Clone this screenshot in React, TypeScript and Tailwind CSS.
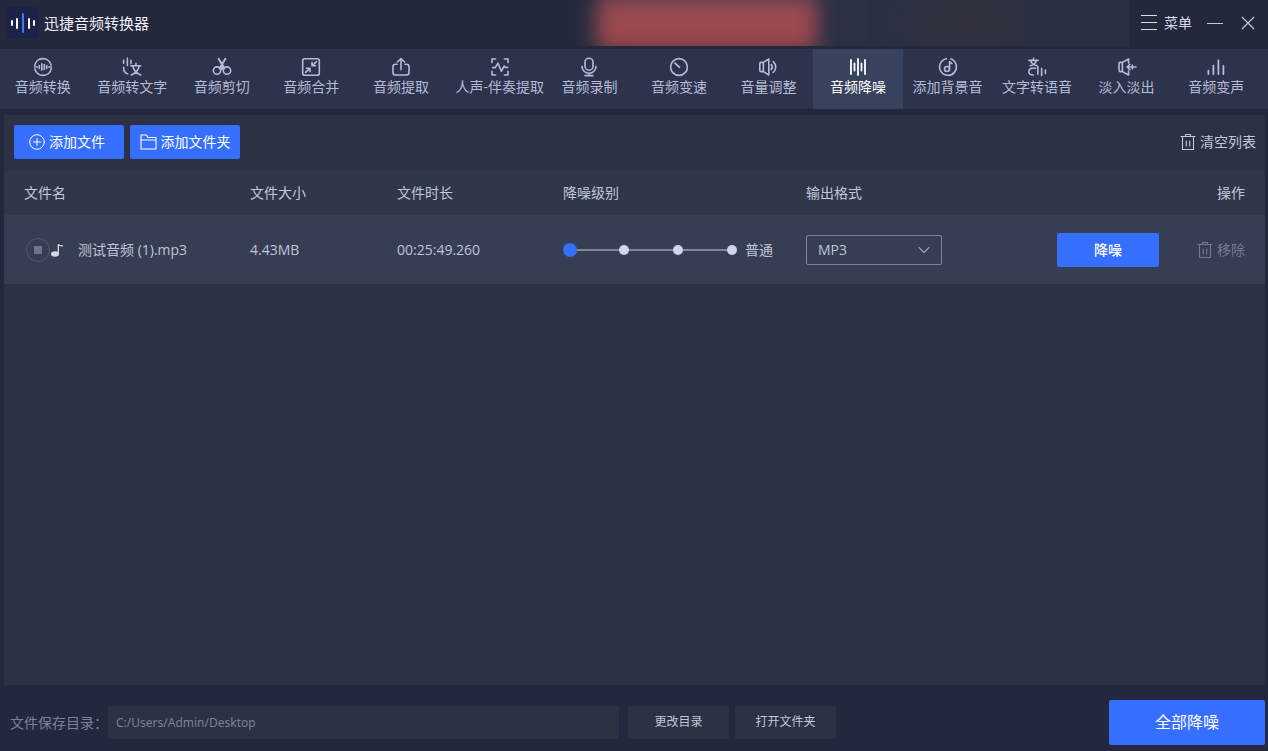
import { useState, type ReactNode } from "react";

const strokeProps = {
  fill: "none",
  stroke: "currentColor",
  strokeWidth: 1.6,
  strokeLinecap: "round",
  strokeLinejoin: "round",
} as const;

function TabIcon({ children }: { children: ReactNode }) {
  return (
    <svg viewBox="0 0 20 20" className="h-5 w-5 shrink-0" aria-hidden="true" {...strokeProps}>
      {children}
    </svg>
  );
}

const tabs: { label: string; wide?: boolean; icon: ReactNode }[] = [
  {
    label: "音频转换",
    icon: (
      <>
        <path d="M1.7 8.4A8.4 8.4 0 0 1 18.1 8M18.3 11.6A8.4 8.4 0 0 1 1.9 12" />
        <path d="M1.7 10h2.6M15.7 10h2.6M6.3 8.6v2.8M8.8 6.8v6.4M11.3 7.6v4.8M13.7 8.6v2.8" />
      </>
    ),
  },
  {
    label: "音频转文字",
    icon: (
      <>
        <path d="M1.600 3.200v3M5.400 1.400v7M9 3.200v3.400M1.600 10.400c0 3.600 1.200 5.800 4 6.400" />
        <path d="M8.800 8.800h10M14 6.400v2.400M10.800 9c.8 4 3.600 7.400 8 9M17.200 9c-.8 4-3.600 7.400-8 9" />
      </>
    ),
  },
  {
    label: "音频剪切",
    icon: (
      <>
        <circle cx="5" cy="13.600" r="3.700" />
        <circle cx="15" cy="13.600" r="3.700" />
        <path d="M6.600 1.800l5.800 9.400M13.400 1.800L7.600 11.200M10 8v4" strokeWidth="2" />
      </>
    ),
  },
  {
    label: "音频合并",
    icon: (
      <>
        <rect x="1.7" y="1.7" width="16.6" height="16.6" rx="2" />
        <path d="M15.4 4.6l-4 4M11 5.4v3.4h3.6M4.6 15.4l4-4M5.4 11.2H9v3.6" />
      </>
    ),
  },
  {
    label: "音频提取",
    icon: (
      <>
        <path d="M6 7.2H4.4A2.4 2.4 0 0 0 2 9.6v6A2.4 2.4 0 0 0 4.4 18h11.2a2.4 2.4 0 0 0 2.4-2.4v-6a2.4 2.4 0 0 0-2.4-2.4H14" />
        <path d="M10 12.6V1.8M6.4 5L10 1.6 13.6 5" />
      </>
    ),
  },
  {
    label: "人声-伴奏提取",
    wide: true,
    icon: (
      <>
        <path d="M2 5.6V2h3.6M14.4 2H18v3.6M18 14.4V18h-3.6M5.6 18H2v-3.6" />
        <path d="M2.6 10.6h2.6l2.8-4.4 3.4 8L14.2 9l1 1.4h2.4" />
      </>
    ),
  },
  {
    label: "音频录制",
    icon: (
      <>
        <rect x="6" y="1.2" width="8" height="12" rx="4" />
        <path d="M3 9.4a7 6.800 0 0 0 14 0M10 16.2v2.2M6 18.6h8" />
      </>
    ),
  },
  {
    label: "音频变速",
    icon: (
      <>
        <circle cx="10" cy="10" r="8.4" />
        <path d="M6 6.2l4.4 4" strokeWidth="1.8" />
      </>
    ),
  },
  {
    label: "音量调整",
    icon: (
      <>
        <path d="M5.4 5.4H3.2A1.4 1.4 0 0 0 1.8 6.8v6.4a1.4 1.4 0 0 0 1.4 1.4h2.2zM5.4 5.4L10.8 2v16l-5.4-3.4" />
        <path d="M13.2 7.6a3.600 3.600 0 0 1 0 4.800M15.2 4.600a7 7 0 0 1 0 10.800" />
      </>
    ),
  },
  {
    label: "音频降噪",
    icon: (
      <path
        d="M3 3v14M6.500 6.400v7.200M10 2v16M13.500 6.400v7.200M17 3v14"
        strokeWidth="1.800"
      />
    ),
  },
  {
    label: "添加背景音",
    icon: (
      <>
        <path d="M13 2.1a8.400 8.400 0 1 1-4.600-.4" />
        <circle cx="9" cy="12" r="2.5" />
        <path d="M11.5 12V4.600l2.400 2" />
      </>
    ),
  },
  {
    label: "文字转语音",
    icon: (
      <>
        <path d="M2 3.400h9M6.500 1.200v2.200M3.600 3.600c.6 2.200 2.800 4.200 6.200 5.200M9.400 3.600C8.800 5.800 6.600 7.800 3.200 8.800" />
        <path d="M8.400 11.200C5 10.400 2 11.600 1.800 14.400c-.2 2.200 1.600 3.600 4.600 3.600M10.800 9.600v7.600M14.600 11.400v7M18.400 13v3.600" />
      </>
    ),
  },
  {
    label: "淡入淡出",
    icon: (
      <>
        <path d="M5.400 5.400H3.400A1.400 1.400 0 0 0 2 6.800v6.400a1.400 1.400 0 0 0 1.400 1.400h2zM5.400 5.400L11.600 2v4M11.600 14v4l-6.200-3.400" />
        <path d="M10 10h9M12.800 7.400L10.200 10l2.600 2.600M15.400 8v4" />
      </>
    ),
  },
  {
    label: "音频变声",
    icon: <path d="M2.4 13.600V17M7.400 8.600V17M12.400 3.400V17M17.400 9v8" strokeWidth="1.800" />,
  },
];

const files = [{ name: "测试音频 (1).mp3", size: "4.43MB", duration: "00:25:49.260" }];

const levels = ["普通", "中等", "较强", "最强"];

function TrashIcon() {
  return (
    <svg viewBox="0 0 16 18" className="h-[18px] w-4" aria-hidden="true" {...strokeProps} strokeWidth={1.1}>
      <path d="M1 3.500h14M5.500 3.500v-2h5v2M2.500 3.500v13h11v-13M6.300 8v5M9.700 8v5" />
    </svg>
  );
}

function FileRow({ name, size, duration }: (typeof files)[number]) {
  const [level, setLevel] = useState(0);

  return (
    <tr className="h-[69px] bg-[#363e54] text-[#bfc4d9]">
      <td className="pl-[22px]">
        <div className="flex items-center">
          <button aria-label="停止" className="grid h-6 w-6 place-items-center rounded-full border border-[#535b71]">
            <span className="h-2 w-2 bg-[#6c748b]" />
          </button>
          <svg viewBox="0 0 14 16" className="h-4 w-[14px]" aria-hidden="true">
            <ellipse cx="5" cy="12" rx="4" ry="2.800" fill="#d5d8ea" />
            <path d="M8.300 12V2.200q1 2 4.700 1.600" fill="none" stroke="#d5d8ea" strokeWidth="1.300" />
          </svg>
          <span className="ml-[14px]">{name}</span>
        </div>
      </td>
      <td>{size}</td>
      <td>{duration}</td>
      <td>
        <div className="flex items-center gap-1.5">
          <div className="relative h-[14px] w-[176px]">
            <div className="flex h-full items-center justify-between bg-[linear-gradient(#7f879e,#7f879e)] bg-[length:162px_2px] bg-center bg-no-repeat px-[2px]">
              {levels.map((item) => (
                <span key={item} className="h-[10px] w-[10px] rounded-full bg-[#d2d4ea]" />
              ))}
            </div>
            <input
              type="range"
              aria-label="降噪级别"
              min={0}
              max={3}
              value={level}
              onChange={(e) => setLevel(Number(e.target.value))}
              className="absolute inset-0 h-full w-full cursor-pointer appearance-none bg-transparent [&::-webkit-slider-thumb]:h-[14px] [&::-webkit-slider-thumb]:w-[14px] [&::-webkit-slider-thumb]:appearance-none [&::-webkit-slider-thumb]:rounded-full [&::-webkit-slider-thumb]:bg-[#356fff]"
            />
          </div>
          <span>{levels[level]}</span>
        </div>
      </td>
      <td>
        <div className="relative w-[136px]">
          <select
            aria-label="输出格式"
            className="h-[30px] w-full appearance-none rounded-xs border border-[#7d859b] bg-transparent pl-[11px]"
          >
            <option>MP3</option>
            <option>WAV</option>
            <option>FLAC</option>
          </select>
          <svg
            viewBox="0 0 12 8"
            className="pointer-events-none absolute top-[11px] right-3 h-2 w-3 text-[#9aa1b8]"
            aria-hidden="true"
            {...strokeProps}
            strokeWidth={1.1}
          >
            <path d="M1 1.500l5 5 5-5" />
          </svg>
        </div>
      </td>
      <td className="pr-5">
        <div className="flex items-center justify-end gap-[38px]">
          <button className="h-[34px] w-[102px] rounded-xs bg-[#366fff] font-medium text-white">降噪</button>
          <button className="flex items-center gap-1 text-[#737b92]">
            <TrashIcon />
            移除
          </button>
        </div>
      </td>
    </tr>
  );
}

export default function App() {
  const [active, setActive] = useState("音频降噪");

  return (
    <div className="flex min-h-screen flex-col overflow-x-hidden bg-[#24283c] font-['Open_Sans','Noto_Sans_CJK_SC',sans-serif] text-sm leading-5 text-[#c3c7dc]">
      {/* Title bar */}
      <header className="flex h-[49px] items-center pb-[3px]">
        <div className="ml-[7px] grid h-8 w-8 place-items-center rounded-sm bg-[#1c2349]">
          <svg viewBox="0 0 28 20" className="h-5 w-7" fill="none" strokeWidth="2" strokeLinecap="round" aria-hidden="true">
            <path d="M3 8v4M8 6v9M20 6v9M25 8v4" stroke="#fff" />
            <path d="M14 1v18" stroke="#3f78ff" />
          </svg>
        </div>
        <h1 className="ml-[5px] text-[15px] text-[#eceef8]">迅捷音频转换器</h1>
        <div className="ml-auto flex h-[46px] w-[570px] self-start overflow-hidden bg-linear-to-r from-[#24283c] via-[#2d3145] via-15% to-[#2a2f43]">
          <div className="-my-1 ml-[38px] w-[220px] bg-linear-to-b from-[#934c55] to-[#a3474a] blur-[10px]" />
          <div className="ml-[100px] w-[100px] bg-[#32343b] blur-[20px]" />
        </div>
        <button className="ml-3 flex items-center gap-[7px] text-[#d7daea]">
          <svg viewBox="0 0 16 16" className="h-4 w-4" stroke="currentColor" aria-hidden="true">
            <path d="M0 .500h16M0 7.500h16M0 14.500h16" />
          </svg>
          菜单
        </button>
        <button aria-label="最小化" className="ml-[15px]">
          <svg viewBox="0 0 16 16" className="h-4 w-4" stroke="currentColor" aria-hidden="true">
            <path d="M0 8.500h16" />
          </svg>
        </button>
        <button aria-label="关闭" className="mr-[13px] ml-[18px]">
          <svg viewBox="0 0 14 14" className="h-[14px] w-[14px]" stroke="currentColor" strokeWidth="1.2" aria-hidden="true">
            <path d="M1 1l12 12M13 1L1 13" />
          </svg>
        </button>
      </header>

      {/* Function tabs */}
      <nav className="-ml-0.5 flex h-[60px] bg-[#2c334a] pr-[7px] text-[#b6bcd6]">
        {tabs.map(({ label, wide, icon }) => (
          <button
            key={label}
            onClick={() => setActive(label)}
            className={`flex flex-col items-center pt-2 whitespace-nowrap ${
              wide ? "w-[99px] shrink-0 pl-[9px]" : "min-w-0 flex-1"
            } ${active === label ? "bg-[#38425c] text-white" : ""}`}
          >
            <TabIcon>{icon}</TabIcon>
            {label}
          </button>
        ))}
      </nav>

      {/* File list */}
      <main className="mt-1.5 mr-[3px] ml-1 flex-1 bg-[#2c3144]">
        <div className="flex h-14 items-center gap-1.5 pr-[9px] pb-0.5 pl-[10px]">
          <button className="flex h-[34px] w-[110px] items-center justify-center gap-1 rounded-xs bg-[#366fff] pr-1 text-white">
            <svg viewBox="0 0 16 16" className="h-4 w-4" {...strokeProps} strokeWidth={1} aria-hidden="true">
              <circle cx="8" cy="8" r="7.300" />
              <path d="M8 4.500v7M4.500 8h7" />
            </svg>
            添加文件
          </button>
          <button className="flex h-[34px] w-[110px] items-center justify-center gap-1 rounded-xs bg-[#366fff] text-white">
            <svg viewBox="0 0 17 16" className="h-4 w-[17px]" {...strokeProps} strokeWidth={1.1} aria-hidden="true">
              <path d="M1 15V1h5.500l1.500 2.500h8V15zM1 6h15" />
            </svg>
            添加文件夹
          </button>
          <button className="ml-auto flex items-center gap-1">
            <TrashIcon />
            清空列表
          </button>
        </div>
        <table className="w-full table-fixed text-left">
          <colgroup>
            <col className="w-[246px]" />
            <col className="w-[147px]" />
            <col className="w-[166px]" />
            <col className="w-[243px]" />
            <col className="w-[200px]" />
            <col />
          </colgroup>
          <thead>
            <tr className="h-11 bg-[#30374a] [&>th]:font-normal">
              <th className="pl-5">文件名</th>
              <th>文件大小</th>
              <th>文件时长</th>
              <th>降噪级别</th>
              <th>输出格式</th>
              <th className="pr-5 text-right">操作</th>
            </tr>
          </thead>
          <tbody>
            {files.map((file) => (
              <FileRow key={file.name} {...file} />
            ))}
          </tbody>
        </table>
      </main>

      {/* Output folder */}
      <footer className="flex h-[66px] items-center bg-[#24283f] pt-2 pr-[3px] pl-[10px]">
        <label htmlFor="save-path" className="shrink-0 pt-0.5 text-[#7b829a]">
          文件保存目录：
        </label>
        <input
          id="save-path"
          defaultValue="C:/Users/Admin/Desktop"
          className="h-[33px] max-w-[511px] min-w-0 flex-1 bg-[#2c3144] px-2 font-['Noto_Sans',sans-serif] text-xs text-[#7b829a]"
        />
        <button className="ml-[9px] h-[33px] w-[101px] bg-[#2c3144] text-xs">更改目录</button>
        <button className="ml-1.5 h-[33px] w-[101px] bg-[#2c3144] text-xs">打开文件夹</button>
        <button className="ml-auto h-[45px] w-[156px] rounded-xs bg-[#366fff] text-base text-white">
          全部降噪
        </button>
      </footer>
    </div>
  );
}
